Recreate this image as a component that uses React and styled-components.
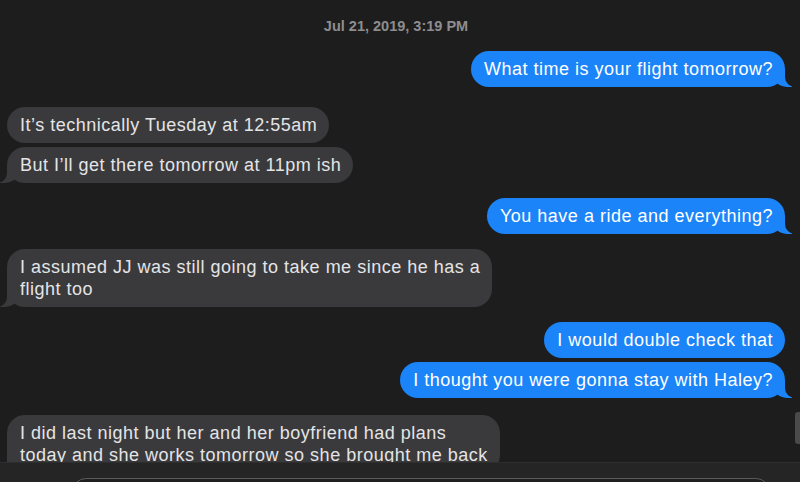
import React from 'react';
import styled, { createGlobalStyle, css } from 'styled-components';

const GlobalStyle = createGlobalStyle`
  html, body {
    margin: 0;
    padding: 0;
    background: #1d1d1d;
  }
  body {
    font-family: "Liberation Sans", Arial, sans-serif;
    -webkit-font-smoothing: antialiased;
  }
`;

const PAGE_BG = '#1d1d1d';
const BLUE = '#1b84f8';
const GRAY = '#3a3a3c';

const Screen = styled.div`
  position: relative;
  display: flex;
  flex-direction: column;
  width: 800px;
  height: 482px;
  overflow: hidden;
  background: ${PAGE_BG};
`;

const Thread = styled.div`
  flex: 1;
  min-height: 0;
  overflow: hidden;
  display: flex;
  flex-direction: column;
  gap: 15px;
  padding: 18px 15px 0 7px;
`;

const Stamp = styled.div`
  text-align: center;
  font-size: 14.5px;
  font-weight: 700;
  line-height: 17px;
  color: #8d8d8f;
  margin-bottom: 1px;
`;

const Group = styled.div`
  display: flex;
  flex-direction: column;
  align-items: ${({ $me }) => ($me ? 'flex-end' : 'flex-start')};
  gap: 4px;
  margin-top: ${({ $gap }) => $gap || 0}px;
`;

const tailRight = css`
  &::before {
    content: '';
    position: absolute;
    bottom: 0;
    right: -7px;
    width: 20px;
    height: 18px;
    background: ${BLUE};
    border-bottom-left-radius: 15px;
  }
  &::after {
    content: '';
    position: absolute;
    bottom: 0;
    right: -26px;
    width: 26px;
    height: 18px;
    background: ${PAGE_BG};
    border-bottom-left-radius: 10px;
  }
`;

const tailLeft = css`
  &::before {
    content: '';
    position: absolute;
    bottom: 0;
    left: -7px;
    width: 20px;
    height: 18px;
    background: ${GRAY};
    border-bottom-right-radius: 15px;
  }
  &::after {
    content: '';
    position: absolute;
    bottom: 0;
    left: -26px;
    width: 26px;
    height: 18px;
    background: ${PAGE_BG};
    border-bottom-right-radius: 10px;
  }
`;

const Bubble = styled.div`
  position: relative;
  padding: 7px 12px 7px 13px;
  min-width: ${({ $minW }) => ($minW ? `${$minW}px` : '0')};
  box-sizing: border-box;
  border-radius: 18px;
  font-size: 18px;
  line-height: 22px;
  letter-spacing: 0.5px;
  white-space: nowrap;
  background: ${({ $me }) => ($me ? BLUE : GRAY)};
  color: ${({ $me }) => ($me ? '#ffffff' : '#e4e4e6')};
  ${({ $tail, $me }) => $tail && ($me ? tailRight : tailLeft)}
`;

const Line = styled.div``;

const Composer = styled.div`
  flex: 0 0 20px;
  box-sizing: border-box;
  overflow: hidden;
  padding: 15px 30px 0 72px;
  background: #252526;
  border-top: 1px solid #2e2e2f;
`;

const Field = styled.div`
  height: 30px;
  border: 1px solid #5a5a5c;
  border-radius: 14px;
  background: #1f1f20;
`;

const ScrollThumb = styled.div`
  position: absolute;
  right: 0;
  top: 412px;
  width: 5px;
  height: 32px;
  border-radius: 3px 0 0 3px;
  background: #4a4a4c;
`;

const groups = [
  { me: true, items: [['What time is your flight tomorrow?']] },
  {
    me: false,
    gap: 5,
    items: [["It\u2019s technically Tuesday at 12:55am"], ["But I\u2019ll get there tomorrow at 11pm ish"]],
  },
  { me: true, items: [['You have a ride and everything?']] },
  {
    me: false,
    minW: 483,
    items: [['I assumed JJ was still going to take me since he has a', 'flight too']],
  },
  {
    me: true,
    items: [['I would double check that'], ['I thought you were gonna stay with Haley?']],
  },
  {
    me: false,
    gap: 2,
    minW: 493,
    items: [
      [
        'I did last night but her and her boyfriend had plans',
        'today and she works tomorrow so she brought me back',
      ],
    ],
  },
];

export default function App() {
  return (
    <>
      <GlobalStyle />
      <Screen>
        <Thread>
          <Stamp>Jul 21, 2019, 3:19 PM</Stamp>
          {groups.map((g, i) => (
            <Group key={i} $me={g.me} $gap={g.gap}>
              {g.items.map((lines, j) => (
                <Bubble
                  key={j}
                  $me={g.me}
                  $minW={g.minW}
                  $tail={j === g.items.length - 1}
                >
                  {lines.map((l, k) => (
                    <Line key={k}>{l}</Line>
                  ))}
                </Bubble>
              ))}
            </Group>
          ))}
        </Thread>
        <Composer>
          <Field />
        </Composer>
        <ScrollThumb />
      </Screen>
    </>
  );
}
